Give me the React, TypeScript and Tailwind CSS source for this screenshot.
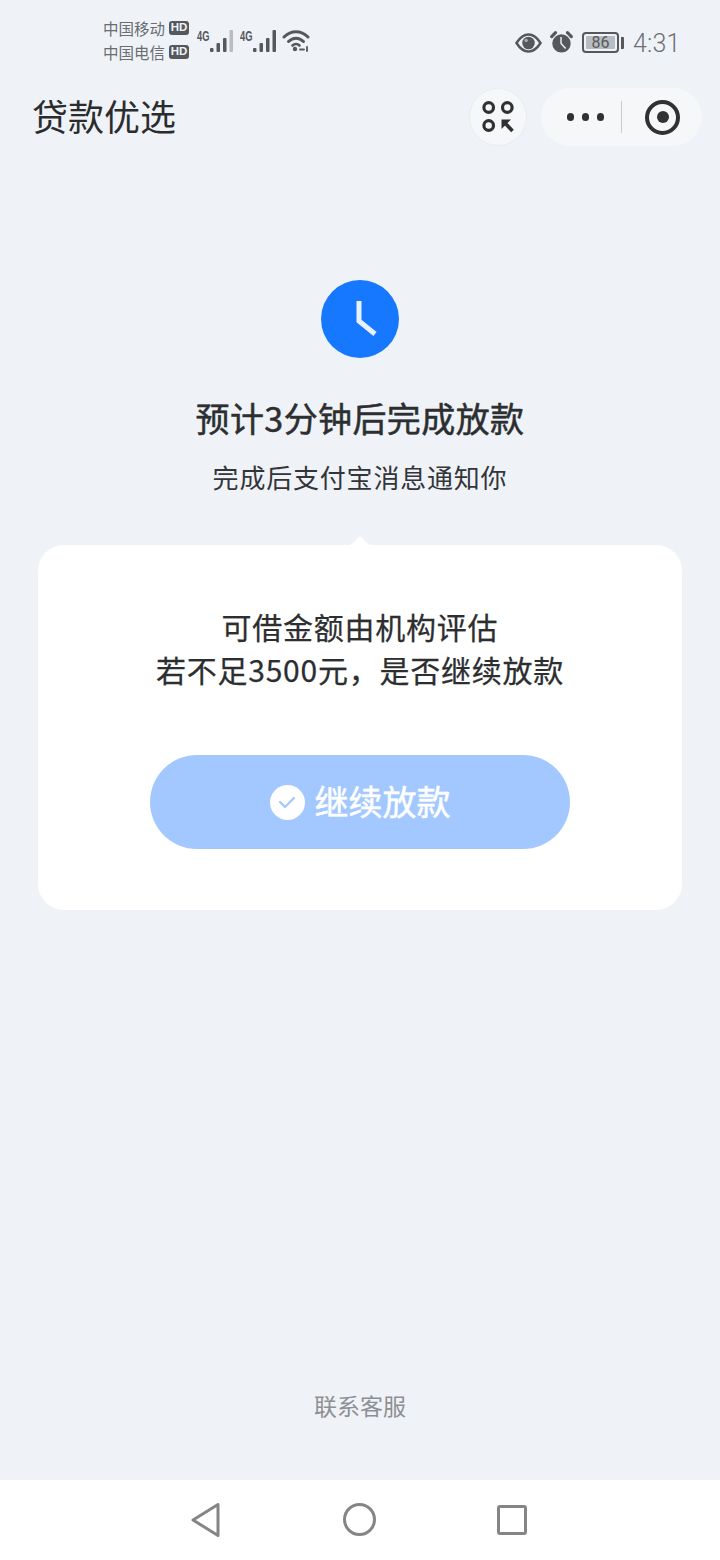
const font = { fontFamily: '"Noto Sans CJK SC", "Noto Sans", sans-serif' };

function Hd() {
  return <span className="inline-flex h-[14px] w-[20px] items-center justify-center rounded-[3px] bg-[#55585c] text-[11.5px] font-bold leading-none text-[#eff3f8]" style={{ fontFamily: '"Liberation Sans", sans-serif' }}>HD</span>;
}

function Signal({ faded }: { faded?: boolean }) {
  return (
    <div className="relative h-[26px] w-[37px]">
      <span className="absolute left-0 top-[-1px] origin-left scale-x-[0.62] text-[15px] font-bold leading-none text-[#55585c]" style={{ fontFamily: '"Liberation Sans", sans-serif' }}>4G</span>
      <svg className="absolute left-[13px] top-0" width="24" height="26" viewBox="0 0 24 26">
        <rect x="0" y="19" width="3.5" height="4" rx="1" fill="#55585c" />
        <rect x="6.5" y="14" width="3.5" height="9" rx="1" fill="#55585c" />
        <rect x="13" y="9" width="3.5" height="14" rx="1" fill="#55585c" />
        <rect x="19.5" y="1" width="3.5" height="22" rx="1" fill={faded ? '#b9bcc0' : '#55585c'} />
      </svg>
    </div>
  );
}

export default function App() {
  return (
    <div className="flex h-[1560px] w-[720px] flex-col overflow-hidden bg-[#eff3f8]" style={font}>
      <div className="flex h-[76px] shrink-0 items-start pl-[103px] pr-[42px] pt-[18px]">
        <div className="flex flex-col gap-[4px] text-[15.5px] leading-[20px] text-[#6a6d70]">
          <div className="flex items-center gap-[4px]">中国移动<Hd /></div>
          <div className="flex items-center gap-[4px]">中国电信<Hd /></div>
        </div>
        <div className="ml-[8px] mt-[11px] flex items-start gap-[6px]">
          <Signal faded />
          <Signal />
          <svg width="28" height="24" viewBox="0 0 28 24" className="ml-[-1px]" fill="none" stroke="#55585c" strokeLinecap="round">
            <path d="M2 8 C9 1 19 1 26 8" strokeWidth="3" />
            <path d="M6.5 12.5 C11 8 17 8 21.5 12.5" strokeWidth="3" />
            <path d="M10.5 16.5 C12.5 14.5 15.5 14.5 17.5 16.5" strokeWidth="2.6" />
            <circle cx="13" cy="20" r="2.2" fill="#55585c" stroke="none" />
            <path d="M18 20.5 h4 M25 18 v4" strokeWidth="1.8" />
          </svg>
        </div>
        <div className="ml-auto mt-[11px] flex items-center">
          <svg width="27" height="20" viewBox="0 0 28 20" className="mr-[8px]">
            <path d="M1.5 10 C6 3 10 1.2 14 1.2 C18 1.2 22 3 26.5 10 C22 17 18 18.8 14 18.8 C10 18.8 6 17 1.5 10Z" fill="none" stroke="#55585c" strokeWidth="2.6" />
            <circle cx="14" cy="10" r="6.5" fill="#55585c" />
            <circle cx="11.5" cy="7.5" r="1.8" fill="#a8abaf" />
          </svg>
          <svg width="23" height="23" viewBox="0 0 25 25" className="mr-[9px]">
            <circle cx="12.5" cy="13.5" r="10" fill="#55585c" />
            <path d="M1.8 6 L6 1.8 M23.2 6 L19 1.8" stroke="#55585c" strokeWidth="3.4" strokeLinecap="round" />
            <path d="M12 6.5 V13.5 L17 19" fill="none" stroke="#eff3f8" strokeWidth="1.6" />
          </svg>
          <div className="flex h-[21px] w-[37px] items-center justify-center rounded-[4px] border-2 border-[#55585c] p-[2px]">
            <div className="flex h-full w-full items-center justify-center rounded-[1px] bg-[#b9bcc0] text-[16px] leading-none text-[#55585c]" style={{ fontFamily: 'Roboto, sans-serif' }}>86</div>
          </div>
          <div className="ml-[2px] h-[12px] w-[3px] rounded-r-[1px] bg-[#55585c]" />
          <span className="ml-[9px] mt-[2px] w-[45px] text-[25px] leading-none tracking-[0.2px] text-[#6d7073]" style={{ fontFamily: 'Roboto, sans-serif', fontWeight: 300 }}>4:31</span>
        </div>
      </div>

      <div className="flex h-[82px] shrink-0 items-center pl-[32px] pr-[18px]">
        <h1 className="mb-[4px] text-[36px] font-normal leading-none text-[#2a2c2e]">贷款优选</h1>
        <button className="ml-auto flex h-[58px] w-[58px] items-center justify-center rounded-full border border-[#e9ecf1] bg-[#f6f7f9]">
          <svg width="32" height="32" viewBox="0 0 32 32" fill="none" stroke="#2f3133" strokeWidth="3.2">
            <circle cx="6.7" cy="6.5" r="4.8" />
            <circle cx="25.3" cy="6.5" r="4.8" />
            <circle cx="6.7" cy="24.5" r="4.8" />
            <path d="M19.5 18.5 H29 L19.5 28 Z" fill="#2f3133" stroke="none" />
            <path d="M22 21 L30.5 30" strokeWidth="3.6" />
          </svg>
        </button>
        <div className="ml-[14px] flex h-[58px] w-[161px] items-center rounded-full bg-[#f6f7f9]">
          <div className="flex w-[80px] items-center justify-end gap-[7.5px] pr-[17px]">
            <span className="h-[7.5px] w-[7.5px] rounded-full bg-[#2f3133]" />
            <span className="h-[7.5px] w-[7.5px] rounded-full bg-[#2f3133]" />
            <span className="h-[7.5px] w-[7.5px] rounded-full bg-[#2f3133]" />
          </div>
          <div className="h-[32px] w-px bg-[#c9cbce]" />
          <div className="ml-[23px] flex h-[35px] w-[35px] items-center justify-center rounded-full border-[4px] border-[#2f3133]">
            <span className="h-[12px] w-[12px] rounded-full bg-[#2f3133]" />
          </div>
        </div>
      </div>

      <div className="flex flex-1 flex-col items-center pt-[122px]">
        <div className="flex h-[78px] w-[78px] items-center justify-center rounded-full bg-[#1677ff]">
          <svg width="78" height="78" viewBox="0 0 78 78" fill="none" stroke="#e8f1ff" strokeWidth="5">
            <path d="M38 21 V41 L54 54" />
          </svg>
        </div>
        <h2 className="mt-[36px] text-[34px] font-normal leading-[48px] tracking-[0.4px] text-[#2c2e30] [-webkit-text-stroke:0.5px_#2c2e30]">预计3分钟后完成放款</h2>
        <p className="mt-[16px] text-[26px] leading-[38px] tracking-[0.8px] text-[#333538]">完成后支付宝消息通知你</p>

        <div className="relative mt-[49px] flex h-[365px] w-[644px] flex-col items-center rounded-[26px] bg-white">
          <svg className="absolute left-[304px] top-[-9px]" width="36" height="10" viewBox="0 0 36 10">
            <path d="M4 10 C10 9 12 6 15 3 C17 0 19 0 21 3 C24 6 26 9 32 10 Z" fill="#fff" />
          </svg>
          <p className="mt-[60px] text-center text-[30px] leading-[43px] tracking-[0.75px] text-[#2c2e30] [-webkit-text-stroke:0.25px_#2c2e30]">可借金额由机构评估<br />若不足3500元，是否继续放款</p>
          <button className="mt-[64px] flex h-[94px] w-[420px] items-center justify-center gap-[10px] rounded-full bg-[#a2c8ff]">
            <span className="flex h-[35px] w-[35px] items-center justify-center rounded-full bg-white">
              <svg width="20" height="16" viewBox="0 0 20 16" fill="none" stroke="#a2c8ff" strokeWidth="2.2" strokeLinecap="round" strokeLinejoin="round">
                <path d="M3 8 L8 13 L17 4" />
              </svg>
            </span>
            <span className="mb-[3px] text-[34px] font-normal leading-none text-white [-webkit-text-stroke:0.5px_#ffffff]">继续放款</span>
          </button>
        </div>

        <a className="mb-[59px] mt-auto text-[23px] leading-[32px] text-[#8e8f92]">联系客服</a>
      </div>

      <div className="flex h-[80px] shrink-0 items-center justify-between bg-white pb-[1px] pl-[191px] pr-[193px]">
        <svg width="30" height="36" viewBox="0 0 30 36" fill="none" stroke="#858585" strokeWidth="3" strokeLinejoin="round"><path d="M2 18 L27 2.5 V33.5 Z" /></svg>
        <div className="h-[33px] w-[33px] rounded-full border-[3px] border-[#858585]" />
        <div className="h-[30px] w-[30px] rounded-[3px] border-[3px] border-[#858585]" />
      </div>
    </div>
  );
}
